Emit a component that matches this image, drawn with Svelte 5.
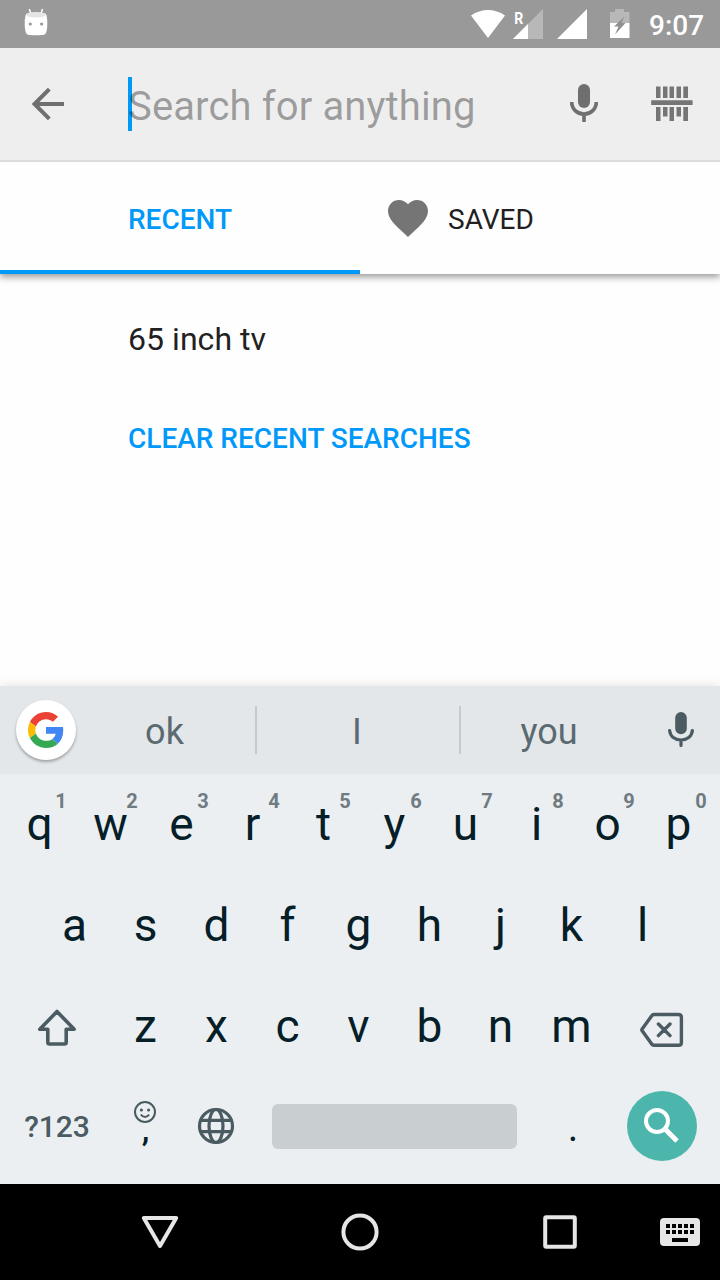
<script>
  const row1 = [...'qwertyuiop'];
  const row2 = [...'asdfghjkl'];
  const row3 = [...'zxcvbnm'];
</script>

<div class="screen">
  <header class="status">
    <svg width="36" height="48" viewBox="18 0 36 48">
      <path d="M30.8 14 29.3 9M41 14 42.5 9" stroke="#fff" stroke-width="1.5" />
      <path d="M27 13.5Q36 11 45.2 13.5Q47.3 14 47.3 24Q47.3 34 44 34.7Q36 36 28 34.7Q24.7 34 24.7 24Q24.7 14 27 13.5Z" fill="#fff" />
      <ellipse cx="36" cy="15" rx="9.7" ry="2.4" fill="#e4e4e4" />
      <circle cx="30.3" cy="24" r="1.6" fill="#999" /><circle cx="41.6" cy="24" r="1.6" fill="#999" />
    </svg>
    <svg class="signals" width="170" height="48" viewBox="465 0 170 48">
      <path d="M471 15.5Q479 10 488 10T505 15.5L488 38Z" fill="#fff" />
      <path d="M543 9V39H513Z" fill="#b8b8b8" /><path d="M528 24V39H513Z" fill="#fff" />
      <text x="514.3" y="23.5" textLength="9" lengthAdjust="spacingAndGlyphs">R</text>
      <path d="M587 9V39H557Z" fill="#fff" />
      <path d="M610 12H615V9H624V12H629.5V23H610Z" fill="#b8b8b8" />
      <path d="M610 23H629.5V38H610Z" fill="#fff" />
      <path d="M624.5 16.5 614 26.5H618.5L615 34.5L625.5 23H621.5Z" fill="#909090" />
    </svg>
    <time>9:07</time>
  </header>

  <div class="toolbar">
    <svg width="128" height="112" viewBox="0 48 128 112">
      <path d="M64 104H35M49.3 89.2 34.5 104 49.3 118.8" fill="none" stroke="#6f6f6f" stroke-width="4" />
    </svg>
    <div class="search"><span class="cursor"></span><span class="hint">Search for anything</span></div>
    <svg width="170" height="112" viewBox="550 48 170 112">
      <rect x="578" y="84" width="12" height="24" rx="6" fill="#6f6f6f" />
      <path d="M571.7 102C571.7 109 577 114 584 114S596.3 109 596.3 102M584 114V122" fill="none" stroke="#6f6f6f" stroke-width="3.6" />
      <path d="M656 86.5h4.5v11.5H656zM663 86.5h4.5v11.5H663zM669.5 86.5h4.5v11.5h-4.5zM676.5 86.5h4.5v11.5h-4.5zM683.3 86.5h4.7v11.5h-4.7zM651.2 100.3h41.4v4.8h-41.4zM656 107h4.5v14H656zM663 107h4.5v9.5H663zM669.5 107h4.5v14h-4.5zM676.5 107h4.5v9.5h-4.5zM683.3 107h4.7v14h-4.7z" fill="#757575" />
    </svg>
  </div>

  <nav class="tabs">
    <div class="tab active"><span>RECENT</span></div>
    <div class="tab saved">
      <svg width="40" height="37" viewBox="2 3 20 18.35" preserveAspectRatio="none"><path fill="#757575" d="M12 21.35l-1.45-1.32C5.4 15.36 2 12.28 2 8.5 2 5.42 4.42 3 7.5 3c1.74 0 3.41.81 4.5 2.09C13.09 3.81 14.76 3 16.5 3 19.58 3 22 5.42 22 8.5c0 3.78-3.4 6.86-8.55 11.54L12 21.35z" /></svg>
      <span>SAVED</span>
    </div>
  </nav>

  <main>
    <div class="recent">65 inch tv</div>
    <div class="clear">CLEAR RECENT SEARCHES</div>
  </main>

  <section class="keyboard">
    <div class="suggestions">
      <div class="google">
        <svg width="36" height="36" viewBox="0 0 48 48">
          <path fill="#EA4335" d="M24 9.5c3.54 0 6.71 1.22 9.21 3.6l6.85-6.85C35.9 2.38 30.47 0 24 0 14.62 0 6.51 5.38 2.56 13.22l7.98 6.19C12.43 13.72 17.74 9.5 24 9.5z" />
          <path fill="#4285F4" d="M46.98 24.55c0-1.57-.15-3.09-.38-4.55H24v9.02h12.94c-.58 2.96-2.26 5.48-4.78 7.18l7.73 6c4.51-4.18 7.09-10.36 7.09-17.65z" />
          <path fill="#FBBC05" d="M10.53 28.59c-.48-1.45-.76-2.99-.76-4.59s.27-3.14.76-4.59l-7.98-6.19C.92 16.46 0 20.12 0 24c0 3.88.92 7.54 2.56 10.78l7.97-6.19z" />
          <path fill="#34A853" d="M24 48c6.48 0 11.93-2.13 15.89-5.81l-7.73-6c-2.15 1.45-4.92 2.3-8.16 2.3-6.26 0-11.57-4.22-13.47-9.91l-7.98 6.19C6.51 42.62 14.62 48 24 48z" />
        </svg>
      </div>
      <span class="word first">ok</span>
      <span class="word second">I</span>
      <span class="word last">you</span>
      <svg class="voice" width="56" height="88" viewBox="653 686 56 88">
        <rect x="675.2" y="712" width="11.6" height="22.3" rx="5.8" fill="#4b5b62" />
        <path d="M669.6 730.5C670.3 736.5 675 740 681 740S691.7 736.5 692.4 730.5M681 740V745.5" fill="none" stroke="#4b5b62" stroke-width="3.2" stroke-linecap="round" />
      </svg>
    </div>

    <div class="row top">
      {#each row1 as k, i}
        <div class="key">{k}<sup>{(i + 1) % 10}</sup></div>
      {/each}
    </div>
    <div class="row middle">
      {#each row2 as k}<div class="key">{k}</div>{/each}
    </div>
    <div class="row">
      <svg width="110" height="101" viewBox="0 976 110 101">
        <path d="M57 1011.5 39.8 1029.3H47.8V1042.2Q47.8 1044 49.6 1044H64.4Q66.2 1044 66.2 1042.2V1029.3H74.2Z" fill="none" stroke="#4b5b62" stroke-width="3.6" stroke-linejoin="round" />
      </svg>
      {#each row3 as k}<div class="key">{k}</div>{/each}
      <svg width="113" height="101" viewBox="607 976 113 101">
        <path d="M654 1014.5H678.5Q681.4 1014.5 681.4 1017.4V1042.4Q681.4 1045.3 678.5 1045.3H654Q652.5 1045.3 651.7 1044L642 1030.5Q641.6 1029.9 642 1029.3L651.7 1015.8Q652.5 1014.5 654 1014.5ZM658.4 1024 670 1035.6M670 1024 658.4 1035.6" fill="none" stroke="#4b5b62" stroke-width="3.4" stroke-linecap="round" />
      </svg>
    </div>
    <div class="row bottom">
      <div class="symbols">?123</div>
      <div class="key comma">
        <svg width="24" height="24" viewBox="133 1100 24 24">
          <circle cx="145" cy="1112" r="10" fill="none" stroke="#4b5b62" stroke-width="2" />
          <circle cx="141.4" cy="1110" r="1.6" fill="#4b5b62" /><circle cx="148.6" cy="1110" r="1.6" fill="#4b5b62" />
          <path d="M140.8 1114.6Q145 1119.4 149.2 1114.6" fill="none" stroke="#4b5b62" stroke-width="2" />
        </svg>
        <span>,</span>
      </div>
      <svg width="71" height="101" viewBox="180 1077 71 101">
        <g fill="none" stroke="#4b5b62" stroke-width="3.2">
          <circle cx="216" cy="1126" r="16.5" /><ellipse cx="216" cy="1126" rx="7" ry="16.5" />
          <path d="M201 1120.3H231M201 1131.7H231" />
        </g>
      </svg>
      <div class="space"></div>
      <div class="key dot">.</div>
      <div class="go">
        <svg width="70" height="70" viewBox="627 1091 70 70">
          <circle cx="657" cy="1121" r="11" fill="none" stroke="#fff" stroke-width="4" />
          <path d="M665 1129 677 1141" stroke="#fff" stroke-width="5" />
        </svg>
      </div>
    </div>
  </section>

  <footer>
    <svg width="720" height="96" viewBox="0 1184 720 96">
      <g fill="none" stroke="#e6e6e6" stroke-width="4" stroke-linejoin="round">
        <path d="M143.8 1218H176.2L160 1246Z" />
        <circle cx="360" cy="1232" r="16.6" />
        <rect x="545.2" y="1217.2" width="29.6" height="29.6" rx="1" />
      </g>
      <rect x="660" y="1218" width="40" height="28" rx="4" fill="#e6e6e6" />
      <path d="M666 1226H694M666 1232H694" stroke="#000" stroke-width="4" stroke-dasharray="4 2" />
      <path d="M672 1240H688" stroke="#000" stroke-width="4" />
    </svg>
  </footer>
</div>

<style>
  :global(body) { margin: 0; }
  .screen { width: 720px; height: 1280px; display: flex; flex-direction: column; overflow: hidden; background: #fefefe; font-family: Roboto, sans-serif; color: #212121; }
  svg { display: block; flex: none; }
  .status { height: 48px; flex: none; display: flex; align-items: center; background: #999; padding-left: 18px; box-sizing: border-box; }
  .signals { margin-left: 411px; }
  .signals text { font: 700 17px Roboto, sans-serif; fill: #fff; }
  time { margin: 3px 0 0 14px; color: #fff; font-size: 28px; font-weight: 500; line-height: 32px; }
  .toolbar { position: relative; z-index: 1; height: 112px; flex: none; display: flex; background: #eee; border-bottom: 2px solid #dcdcdc; }
  .search { width: 422px; display: flex; align-items: center; }
  .cursor { width: 4px; height: 54px; background: #0099fa; margin-right: -4px; }
  .hint { position: relative; margin-top: 6px; font-size: 40px; line-height: 48px; letter-spacing: 0.13px; color: rgba(0, 0, 0, 0.36); white-space: nowrap; }
  .tabs { height: 112px; flex: none; display: grid; grid-template-columns: 1fr 1fr; background: #fefefe; box-shadow: 0 3px 7px rgba(0, 0, 0, 0.4); font-size: 28px; }
  .tab { display: flex; align-items: center; box-sizing: border-box; padding-top: 3px; }
  .active { padding-left: 128px; padding-top: 6px; border-bottom: 4px solid #0099fa; color: #0099fa; font-weight: 500; }
  .saved { padding-left: 28px; gap: 20px; }
  .saved svg { margin-top: -3px; }
  main { flex: 1; padding: 40px 128px; }
  .recent { font-size: 32px; line-height: 50px; letter-spacing: 0.05px; }
  .clear { margin-top: 50px; font-size: 28px; line-height: 50px; font-weight: 500; color: #0099fa; white-space: nowrap; }
  .keyboard { height: 498px; flex: none; background: #ebeff2; color: #061e28; box-shadow: 0 0 10px rgba(0, 0, 0, 0.12); }
  .suggestions { height: 88px; display: flex; align-items: center; background: #e3e7ea; }
  .google { width: 60px; height: 60px; margin-left: 16px; border-radius: 50%; background: #fff; box-shadow: 0 2px 3px rgba(0, 0, 0, 0.3); display: grid; place-items: center; flex: none; }
  .word { box-sizing: border-box; height: 48px; line-height: 53px; font-size: 36px; text-align: center; color: #5b6970; border-right: 2px solid #c5cacd; }
  .first { width: 181px; padding-right: 2px; }
  .second { width: 204px; padding-right: 2px; }
  .last { width: 178px; padding-right: 2px; border: 0; }
  .voice { margin-left: 14px; }
  .row { display: flex; height: 101px; }
  .top { padding-left: 4px; }
  .middle { padding-left: 39px; }
  .key { position: relative; width: 71px; flex: none; text-align: center; font-size: 46px; line-height: 101px; }
  sup { position: absolute; left: 36px; width: 42px; top: 15px; font-size: 20px; line-height: 24px; font-weight: 700; color: #6f7b81; }
  .key:last-child sup { left: 37px; }
  .bottom { align-items: center; }
  .symbols { width: 110px; padding-left: 4px; box-sizing: border-box; text-align: center; font-size: 30px; line-height: 99px; margin-top: -2px; font-weight: 500; color: #4b5b62; }
  .comma { height: 101px; width: 70px; display: flex; flex-direction: column; align-items: center; padding-top: 23px; box-sizing: border-box; }
  .comma span { font-size: 34px; font-weight: 500; line-height: 24px; margin-top: -7px; padding-left: 1px; }
  .space { width: 245px; height: 45px; margin: -2px 0 0 21px; border-radius: 6px; background: #c9ced1; }
  .dot { width: 110px; box-sizing: border-box; padding-left: 2px; font-size: 40px; }
  .go { width: 70px; height: 70px; margin-top: -3px; border-radius: 50%; background: #4db6ac; }
  footer { height: 96px; flex: none; background: #000; }
</style>
